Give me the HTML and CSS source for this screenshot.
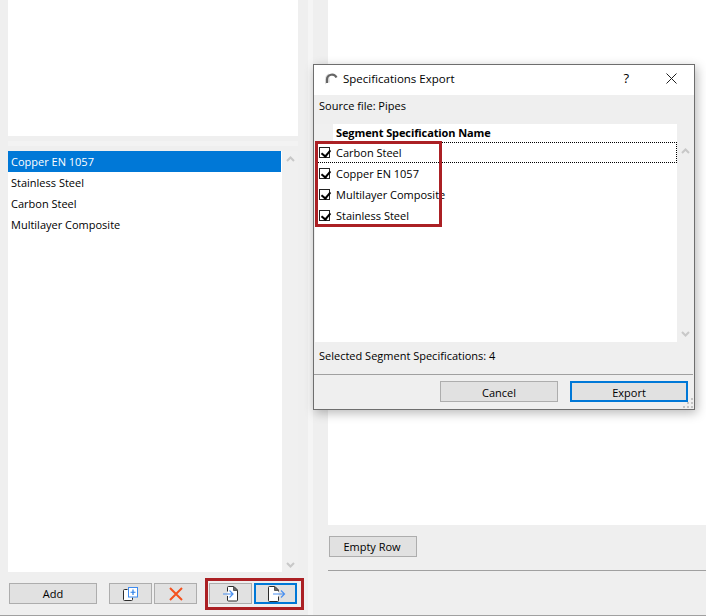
FILE: index.html
```html
<!DOCTYPE html>
<html lang="en">
<head>
<meta charset="utf-8">
<title>Specifications Export</title>
<link rel="stylesheet" href="styles.css">
</head>
<body>
<div class="app">
  <div class="left">
    <div class="top-box"></div>
    <div class="strip"></div>
    <div class="list-wrap">
      <ul class="list">
        <li class="list-row selected">Copper EN 1057</li>
        <li class="list-row">Stainless Steel</li>
        <li class="list-row">Carbon Steel</li>
        <li class="list-row">Multilayer Composite</li>
      </ul>
      <div class="gutter">
        <svg class="arrow" width="9" height="6" viewBox="0 0 9 6"><path d="M1 5l3.500-3.500L8 5" fill="none" stroke="#c8c8c8" stroke-width="2"/></svg>
        <svg class="arrow" width="9" height="6" viewBox="0 0 9 6"><path d="M1 1l3.500 3.500L8 1" fill="none" stroke="#c8c8c8" stroke-width="2"/></svg>
      </div>
    </div>
    <div class="toolbar">
      <button class="btn add">Add</button>
      <button class="btn icon dup">
        <svg width="15" height="14" viewBox="0 0 15 14"><path d="M4.500 2.500H1.500a1 1 0 0 0-1 1v9a1 1 0 0 0 1 1h7a1 1 0 0 0 1-1v-2" fill="#fff" stroke="#2b2b2b"/><rect x="5.500" y="0.500" width="9" height="9.500" fill="#fff" stroke="#3d8bf0"/><path d="M10 2.500v5.500M7.500 5.250h5" stroke="#2a7fe8" stroke-width="1.200"/></svg>
      </button>
      <button class="btn icon del">
        <svg width="14" height="14" viewBox="0 0 14 14"><path d="M1 1l12 12M13 1L1 13" stroke="#f4511e" stroke-width="2"/></svg>
      </button>
      <div class="io-group">
        <button class="btn icon">
          <svg width="15" height="16" viewBox="0 0 15 16"><path d="M4.500 5.500V1.500a1 1 0 0 1 1-1h5.500l3.500 3.500v10a1 1 0 0 1-1 1h-8a1 1 0 0 1-1-1v-4" fill="#fff" stroke="#2b2b2b"/><path d="M10.500 .5v4h4z" fill="#666" stroke="#555"/><path d="M0 8h9.500M6.500 4.500L10 8l-3.500 3.500" fill="none" stroke="#4a90f0" stroke-width="1.200"/></svg>
        </button>
        <button class="btn icon focused">
          <svg width="23" height="16" viewBox="0 0 23 16"><path d="M14.500 5.500V4L11 .5H5.500a1 1 0 0 0-1 1v13a1 1 0 0 0 1 1h8a1 1 0 0 0 1-1v-4" fill="#fff" stroke="#2b2b2b"/><path d="M10.500 .5v4h4z" fill="#666" stroke="#555"/><path d="M9 8h11M17 4.500L20.500 8 17 11.500" fill="none" stroke="#4a90f0" stroke-width="1.200"/></svg>
        </button>
      </div>
    </div>
  </div>
  <div class="divider"></div>
  <div class="right">
    <div class="right-box"></div>
    <div class="right-actions"><button class="btn empty">Empty Row</button></div>
    <div class="right-rule"></div>
  </div>
</div>
<div class="dialog">
  <div class="titlebar">
    <svg class="app-icon" width="14" height="14" viewBox="0 0 14 14"><path d="M1 13.500V8a6 6 0 0 1 4-5.500l1 9H3.500z" fill="#e2e2e2"/><path d="M3 12V8.500A5 5 0 0 1 12.500 6.500" fill="none" stroke="#666" stroke-width="2.200"/></svg>
    <span class="title">Specifications Export</span>
    <span class="help">?</span>
    <svg class="close" width="11" height="11" viewBox="0 0 11 11"><path d="M.5 .5l10 10M10.500 .5l-10 10" stroke="#1f1f1f"/></svg>
  </div>
  <div class="source">Source file: Pipes</div>
  <div class="table-wrap">
    <div class="table">
      <div class="table-head"><div class="head-check"></div><div class="head-name">Segment Specification Name</div></div>
      <div class="row focus-row"><span class="check"></span><span>Carbon Steel</span></div>
      <div class="row"><span class="check"></span><span>Copper EN 1057</span></div>
      <div class="row"><span class="check"></span><span>Multilayer Composite</span></div>
      <div class="row"><span class="check"></span><span>Stainless Steel</span></div>
    </div>
    <div class="table-gutter">
      <svg class="arrow" width="9" height="6" viewBox="0 0 9 6"><path d="M1 5l3.500-3.500L8 5" fill="none" stroke="#c8c8c8" stroke-width="2"/></svg>
      <svg class="arrow" width="9" height="6" viewBox="0 0 9 6"><path d="M1 1l3.500 3.500L8 1" fill="none" stroke="#c8c8c8" stroke-width="2"/></svg>
    </div>
  </div>
  <div class="selected-count">Selected Segment Specifications: 4</div>
  <div class="dialog-actions">
    <button class="btn dlg">Cancel</button>
    <button class="btn dlg focused">Export</button>
  </div>
  <svg class="grip" width="11" height="11" viewBox="0 0 11 11"><path d="M8 0h2v2H8zM4 4h2v2H4zM8 4h2v2H8zM0 8h2v2H0zM4 8h2v2H4zM8 8h2v2H8z" fill="#c4c4c4"/></svg>
</div>
<div class="mark mark-list"></div>
<div class="mark mark-tools"></div>
</body>
</html>
```
FILE: styles.css
```css
* { box-sizing: border-box; }
html, body { margin: 0; padding: 0; }
body {
  width: 706px; height: 616px; overflow: hidden; position: relative;
  background: #efefef; color: #000;
  font: 11px/15px "Open Sans", "Noto Sans", sans-serif;
}
ul { list-style: none; margin: 0; padding: 0; }
button { font: inherit; color: inherit; margin: 0; padding: 0; }

.app { display: flex; height: 616px; border-bottom: 1px solid #a0a0a0; }
.left { width: 308px; padding-left: 8px; padding-right: 10px; display: flex; flex-direction: column; }
.top-box { height: 136px; background: #fff; }
.strip { height: 5px; margin-top: 5px; background: #f3f3f3; }
.list-wrap { height: 421px; margin-top: 5px; display: flex; }
.list { width: 274px; background: #fff; }
.list-row { height: 21px; padding-left: 3px; line-height: 21px; }
.list-row.selected { background: #0078d7; color: #fff; margin-right: 1px; }
.gutter { width: 16px; background: #f0f0f0; display: flex; flex-direction: column; justify-content: space-between; align-items: center; padding: 5px 0 4px; }
.arrow { display: block; }

.btn { height: 21px; background: #e1e1e1; border: 1px solid #adadad; display: flex; align-items: center; justify-content: center; }
.btn.focused { border: 2px solid #0078d7; }
.toolbar { display: flex; margin-top: 11px; padding-left: 1px; }
.add { width: 88px; }
.icon { width: 43px; }
.dup { margin-left: 12px; }
.del { margin-left: 2px; }
.io-group { display: flex; gap: 2px; margin-left: 12px; }

.divider { width: 5px; background: #f5f5f5; }
.right { flex: 1; padding-left: 15px; display: flex; flex-direction: column; }
.right-box { height: 525px; background: #fff; }
.right-actions { padding: 11px 0 0 1px; }
.empty { width: 88px; padding-right: 2px; }
.right-rule { height: 1px; margin-top: 13px; background: #a0a0a0; }

.dialog {
  position: absolute; left: 313px; top: 64px; width: 382px; height: 346px;
  background: #efefef; border: 1px solid #6e6e6e;
  box-shadow: 2px 3px 10px rgba(0,0,0,.28);
  display: flex; flex-direction: column;
}
.titlebar { height: 30px; padding-bottom: 4px; background: #fff; display: flex; align-items: center; padding-left: 10px; font-size: 11.500px; }
.title { margin-left: 5px; flex: 1; }
.help { margin-right: 37px; font-size: 13px; }
.close { margin-right: 17px; }
.source { height: 29px; padding: 3px 0 0 5px; }
.table-wrap { height: 218px; display: flex; }
.table { width: 362px; margin-left: 1px; background: #fff; }
.table-head { display: flex; height: 18px; background: #fff; }
.head-check { width: 18px; background: #f0f0f0; }
.head-name { padding-left: 3px; font-weight: 700; line-height: 18px; letter-spacing: -.1px; }
.row { height: 21px; display: flex; align-items: center; gap: 6px; padding-left: 4px; }
.focus-row { border: 1px dotted #000; padding-left: 3px; }
.check { width: 11px; height: 11px; border: 1px solid #222; background: #fff; position: relative; flex: none; }
.check::after {
  content: ""; position: absolute; left: 3px; top: 0; width: 4px; height: 7px;
  border-right: 2px solid #000; border-bottom: 2px solid #000; transform: rotate(40deg);
}
.table-gutter { width: 17px; display: flex; flex-direction: column; justify-content: space-between; align-items: center; padding: 24px 0 5px; }
.selected-count { height: 33px; padding: 6px 0 0 5px; line-height: 15px; border-bottom: 1px solid #a0a0a0; margin-right: 1px; }
.dialog-actions { display: flex; gap: 12px; padding: 6px 0 0 126px; }
.dlg { width: 118px; padding-top: 1px; }
.grip { position: absolute; right: 0; bottom: 0; }

.mark { position: absolute; border: 3px solid #ab2024; pointer-events: none; }
.mark-list { left: 315px; top: 141px; width: 127px; height: 86px; }
.mark-tools { left: 205px; top: 578px; width: 99px; height: 32px; }
```
